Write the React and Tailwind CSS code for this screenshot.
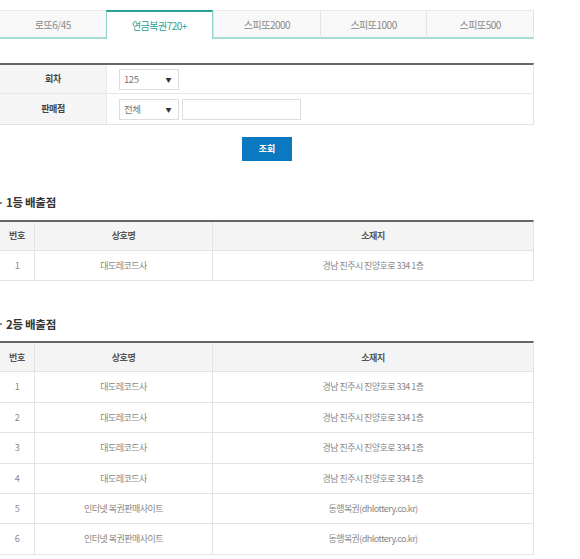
import React from "react";

const font = { fontFamily: '"Noto Sans CJK KR", "Noto Sans", sans-serif' };

const tabs = ["로또6/45", "연금복권720+", "스피또2000", "스피또1000", "스피또500"];

function Select({ value }) {
  return (
    <div className="flex h-[21px] w-[60px] items-center justify-between border border-[#dddddd] bg-white pl-[4px] pr-[7px] text-[9.5px] tracking-[-0.4px] text-[#777]">
      <span>{value}</span>
      <span className="text-[6px] text-[#333]">▼</span>
    </div>
  );
}

function Table({ rows }) {
  return (
    <div className="border-t-2 border-t-[#666666] border-r border-r-[#e3e3e3]">
      <div className="grid h-[29px] grid-cols-[35px_178px_1fr] border-b border-b-[#e3e3e3] bg-[#f4f4f4] text-[9px] font-bold tracking-[-0.4px] text-[#555]">
        <div className="flex items-center justify-center border-r border-r-[#e3e3e3]">번호</div>
        <div className="flex items-center justify-center border-r border-r-[#e3e3e3]">상호명</div>
        <div className="flex items-center justify-center">소재지</div>
      </div>
      {rows.map((r, i) => (
        <div key={i} className="grid h-[30.4px] grid-cols-[35px_178px_1fr] border-b border-b-[#e3e3e3] text-[9px] tracking-[-0.55px] text-[#888]">
          <div className="flex items-center justify-center border-r border-r-[#e3e3e3]">{i + 1}</div>
          <div className="flex items-center justify-center border-r border-r-[#e3e3e3]">{r[0]}</div>
          <div className="flex items-center justify-center">{r[1]}</div>
        </div>
      ))}
    </div>
  );
}

function Title({ children }) {
  return (
    <div className="flex h-[16px] items-center text-[11.5px] font-bold tracking-[-0.3px] text-[#333]">
      <span className="mr-[4px] h-[2px] w-[2px] bg-[#888]" />
      {children}
    </div>
  );
}

export default function App() {
  const store = ["대도레코드사", "경남 진주시 진양호로 334 1층"];
  const online = ["인터넷 복권판매사이트", "동행복권(dhlottery.co.kr)"];
  return (
    <div className="min-h-[559px] w-[580px] bg-white pt-[10px]" style={font}>
      <div className="w-[534px]">
        <div className="flex h-[29px]">
          {tabs.map((t, i) =>
            i === 1 ? (
              <div key={t} className="flex flex-1 items-center justify-center border-t-2 border-x border-t-[#2aa197] border-x-[#8dd2cb] bg-white text-[10px] tracking-[-0.5px] text-[#2aa197]">
                {t}
              </div>
            ) : (
              <div key={t} className={`flex flex-1 items-center justify-center border-t border-t-[#e8e8e8] border-b-2 border-b-[#a6dcd6] bg-[#f8f8f8] text-[10px] tracking-[-0.5px] text-[#888] ${i > 1 ? "border-l border-l-[#e3e3e3]" : ""} ${i === 4 ? "border-r border-r-[#e3e3e3]" : ""}`}>
                {t}
              </div>
            )
          )}
        </div>

        <div className="mt-[24px] border-t-2 border-t-[#666666] border-r border-r-[#e3e3e3] text-[9px] tracking-[-0.4px]">
          <div className="flex h-[29px] border-b border-b-[#e8e8e8]">
            <div className="flex w-[107px] items-center justify-center border-r border-r-[#e8e8e8] bg-[#f5f5f5] font-bold text-[#444]">회차</div>
            <div className="flex items-center pl-[12px]">
              <Select value="125" />
            </div>
          </div>
          <div className="flex h-[31px] border-b border-b-[#e3e3e3]">
            <div className="flex w-[107px] items-center justify-center border-r border-r-[#e8e8e8] bg-[#f5f5f5] font-bold text-[#444]">판매점</div>
            <div className="flex items-center gap-[3px] pl-[12px]">
              <Select value="전체" />
              <div className="h-[21px] w-[119px] border border-[#dddddd] bg-white" />
            </div>
          </div>
        </div>

        <div className="mt-[12px] flex justify-center">
          <div className="flex h-[24px] w-[50px] items-center justify-center bg-[#0b79c1] text-[9px] font-bold text-white">조회</div>
        </div>

        <div className="mt-[34px]">
          <Title>1등 배출점</Title>
        </div>
        <div className="mt-[9px]">
          <Table rows={[store]} />
        </div>

        <div className="mt-[35px]">
          <Title>2등 배출점</Title>
        </div>
        <div className="mt-[9px]">
          <Table rows={[store, store, store, store, online, online]} />
        </div>
      </div>
    </div>
  );
}
